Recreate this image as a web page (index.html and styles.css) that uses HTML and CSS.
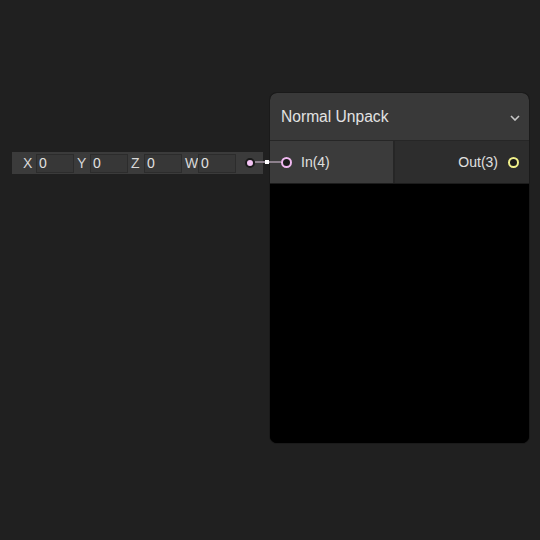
FILE: index.html
```html
<!DOCTYPE html>
<html>
<head>
<meta charset="utf-8">
<link rel="stylesheet" href="styles.css">
</head>
<body>
<div class="canvas">
  <div class="inline-field">
    <span class="lbl">X</span><span class="num">0</span>
    <span class="lbl">Y</span><span class="num">0</span>
    <span class="lbl">Z</span><span class="num">0</span>
    <span class="lbl">W</span><span class="num">0</span>
  </div>
  <div class="dot-src"></div>

  <div class="node">
    <div class="node-header">
      <span class="title">Normal Unpack</span>
      <svg class="chev" width="10" height="6" viewBox="0 0 10 6"><path d="M1 1 L5 5 L9 1" fill="none" stroke="#c8c8c8" stroke-width="1.6"/></svg>
    </div>
    <div class="ports">
      <div class="port-in">
        <span class="ring ring-pink"></span>
        <span class="plabel">In(4)</span>
      </div>
      <div class="port-out">
        <span class="plabel">Out(3)</span>
        <span class="ring ring-yellow"></span>
      </div>
    </div>
    <div class="node-body"></div>
  </div>
  <div class="wire"><span class="wire-knot"></span></div>
</div>
</body>
</html>
```

FILE: styles.css
```css
html, body {
  margin: 0;
  padding: 0;
  background: #202020;
}
.canvas {
  position: relative;
  width: 540px;
  height: 540px;
  font-family: "Liberation Sans", Arial, sans-serif;
}
.inline-field {
  position: absolute;
  left: 12px;
  top: 152px;
  width: 251px;
  height: 22px;
  box-sizing: border-box;
  background: #3b3b3b;
  display: flex;
  align-items: center;
  padding-left: 11px;
}
.lbl {
  color: #d8d8d8;
  font-size: 14px;
  width: 13px;
  flex: none;
}
.inline-field .lbl:nth-child(n+3) { margin-left: 3px; }
.num {
  flex: none;
  width: 38px;
  height: 19px;
  box-sizing: border-box;
  background: #373737;
  border: 1px solid #2c2c2c;
  color: #e0e0e0;
  font-size: 14px;
  line-height: 17px;
  padding-left: 2px;
}
.dot-src {
  position: absolute;
  left: 245px;
  top: 158px;
  width: 6px;
  height: 6px;
  border-radius: 50%;
  background: #f4c4f4;
  border: 2px solid #1a1a1a;
}
.wire {
  position: absolute;
  left: 255px;
  top: 161px;
  width: 26px;
  height: 2px;
  background: #8c808c;
}
.wire-knot {
  position: absolute;
  left: 10px;
  top: -1px;
  width: 4px;
  height: 4px;
  background: #ffffff;
}
.node {
  position: absolute;
  left: 270px;
  top: 93px;
  width: 259px;
  height: 350px;
  border-radius: 7px;
  overflow: hidden;
  background: #000;
  box-shadow: 0 0 0 1px #1a1a1a;
  display: flex;
  flex-direction: column;
}
.node-header {
  height: 47px;
  flex: none;
  background: #393939;
  border-bottom: 1px solid #262626;
  display: flex;
  align-items: center;
  justify-content: space-between;
  padding: 0 9px 0 11px;
}
.title {
  color: #e2e2e2;
  font-size: 15.6px;
}
.chev { margin-top: 2px; }
.ports {
  height: 42px;
  flex: none;
  display: flex;
  border-bottom: 1px solid #1c1c1c;
}
.port-in {
  width: 125px;
  box-sizing: border-box;
  background: #3b3b3b;
  border-right: 2px solid #262626;
  display: flex;
  align-items: center;
  padding-left: 11px;
  gap: 9px;
}
.port-out {
  flex: 1;
  background: #2d2d2d;
  display: flex;
  align-items: center;
  justify-content: flex-end;
  padding-right: 10px;
  gap: 10px;
}
.plabel {
  color: #e0e0e0;
  font-size: 14px;
}
.ring {
  width: 7px;
  height: 7px;
  border-radius: 50%;
  background: #1c1c1c;
  flex: none;
}
.ring-pink { border: 2px solid #f0b8f0; }
.ring-yellow { border: 2px solid #f0f08a; }
.node-body {
  flex: 1;
  background: #000;
}
```
